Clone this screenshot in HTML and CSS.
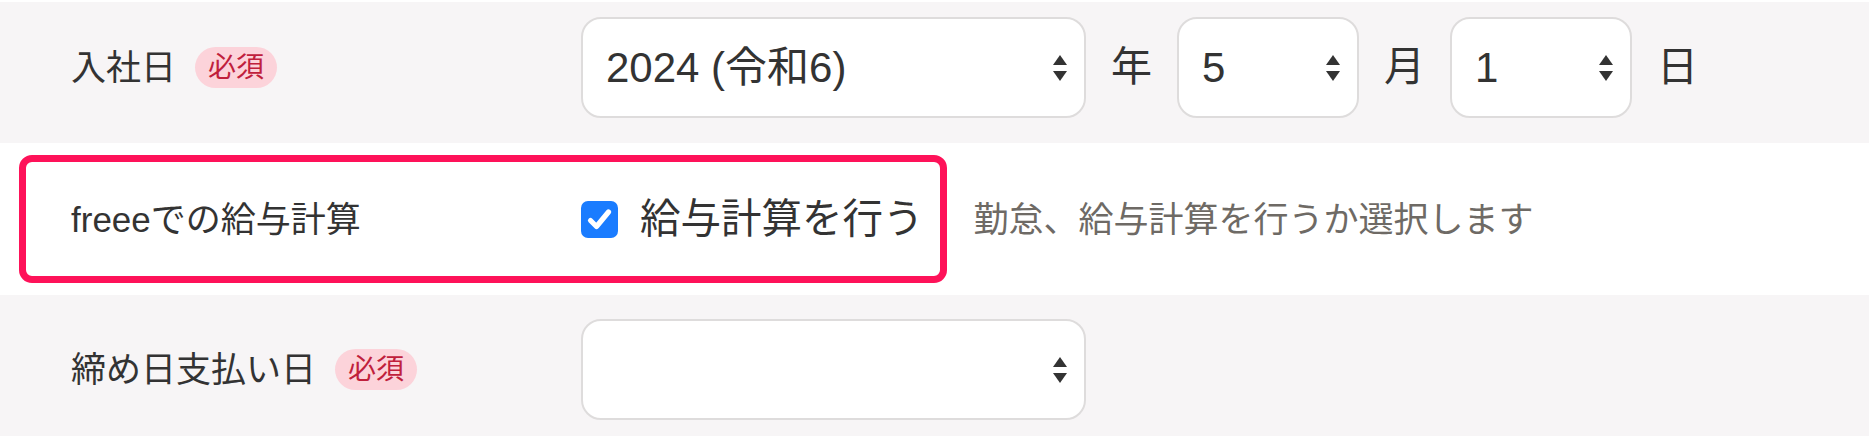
FILE: index.html
```html
<!DOCTYPE html>
<html lang="ja">
<head>
<meta charset="utf-8">
<title>従業員情報</title>
<link rel="stylesheet" href="styles.css">
</head>
<body>
<div class="form">
  <div class="row row-gray row-first">
    <div class="label-cell">
      <span class="label">入社日</span>
      <span class="badge">必須</span>
    </div>
    <div class="controls">
      <div class="select select-year">
        <span class="select-value">2024 (令和6)</span>
        <svg class="arrows" width="14" height="26" viewBox="0 0 14 26"><polygon points="0,10 7,0 14,10"/><polygon points="0,16 14,16 7,26"/></svg>
      </div>
      <span class="unit">年</span>
      <div class="select select-small">
        <span class="select-value">5</span>
        <svg class="arrows" width="14" height="26" viewBox="0 0 14 26"><polygon points="0,10 7,0 14,10"/><polygon points="0,16 14,16 7,26"/></svg>
      </div>
      <span class="unit">月</span>
      <div class="select select-small">
        <span class="select-value">1</span>
        <svg class="arrows" width="14" height="26" viewBox="0 0 14 26"><polygon points="0,10 7,0 14,10"/><polygon points="0,16 14,16 7,26"/></svg>
      </div>
      <span class="unit">日</span>
    </div>
  </div>

  <div class="row row-white">
    <div class="highlight">
      <div class="label-cell label-cell-inner">
        <span class="label">freeeでの給与計算</span>
      </div>
      <label class="check">
        <span class="checkbox">
          <svg width="37" height="37" viewBox="0 0 37 37"><path d="M9.5 19.5 L15.5 25.5 L27.5 11" fill="none" stroke="#fff" stroke-width="5.2" stroke-linecap="round" stroke-linejoin="round"/></svg>
        </span>
        <span class="check-text">給与計算を行う</span>
      </label>
    </div>
    <span class="hint">勤怠、給与計算を行うか選択します</span>
  </div>

  <div class="row row-gray row-last">
    <div class="label-cell">
      <span class="label">締め日支払い日</span>
      <span class="badge">必須</span>
    </div>
    <div class="controls">
      <div class="select select-year">
        <span class="select-value"></span>
        <svg class="arrows" width="14" height="26" viewBox="0 0 14 26"><polygon points="0,10 7,0 14,10"/><polygon points="0,16 14,16 7,26"/></svg>
      </div>
    </div>
  </div>
</div>
</body>
</html>
```

FILE: styles.css
```css
html, body {
  margin: 0;
  padding: 0;
  background: #ffffff;
}

body {
  font-family: "Liberation Sans", "Noto Sans CJK JP", sans-serif;
  color: #333333;
  width: 1869px;
  height: 436px;
  overflow: hidden;
}

.form {
  padding-top: 2px;
}

.row {
  display: flex;
  align-items: center;
  box-sizing: border-box;
}

.row-gray {
  background: #f7f5f6;
}

.row-white {
  background: #ffffff;
  height: 152px;
}

.row-first {
  height: 141px;
  padding-bottom: 10px;
}

.row-last {
  height: 141px;
  padding-top: 8px;
}

.label-cell {
  width: 581px;
  padding-left: 71px;
  box-sizing: border-box;
  display: flex;
  align-items: center;
  flex-shrink: 0;
}

.label-cell-inner {
  width: 555px;
  padding-left: 45px;
}

.label {
  font-size: 35px;
  line-height: 1;
  color: #333333;
}

.badge {
  margin-left: 19px;
  font-size: 28px;
  line-height: 41px;
  height: 41px;
  padding: 0 13px;
  border-radius: 21px;
  background: #fcd3da;
  color: #c0203c;
}

.controls {
  display: flex;
  align-items: center;
  gap: 25px;
}

.select {
  height: 101px;
  box-sizing: border-box;
  border: 2px solid #dedcdc;
  border-radius: 20px;
  background: #ffffff;
  display: flex;
  align-items: center;
  justify-content: space-between;
  padding: 0 17px 0 23px;
}

.select-year {
  width: 505px;
}

.select-small {
  width: 182px;
}

.select-value {
  font-size: 42px;
  line-height: 1;
  color: #333333;
}

.arrows {
  fill: #333333;
  flex-shrink: 0;
}

.unit {
  font-size: 41px;
  line-height: 1;
  color: #333333;
}

.highlight {
  margin-left: 19px;
  height: 128px;
  box-sizing: border-box;
  border: 7px solid #fe1259;
  border-radius: 13px;
  display: flex;
  align-items: center;
  padding-right: 16px;
}

.check {
  display: flex;
  align-items: center;
}

.checkbox {
  width: 37px;
  height: 37px;
  border-radius: 7px;
  background: #1a7cff;
  display: flex;
}

.check-text {
  margin-left: 22px;
  font-size: 40.5px;
  line-height: 1;
  color: #333333;
}

.hint {
  margin-left: 27px;
  font-size: 35px;
  line-height: 1;
  color: #6e6a65;
}
```
